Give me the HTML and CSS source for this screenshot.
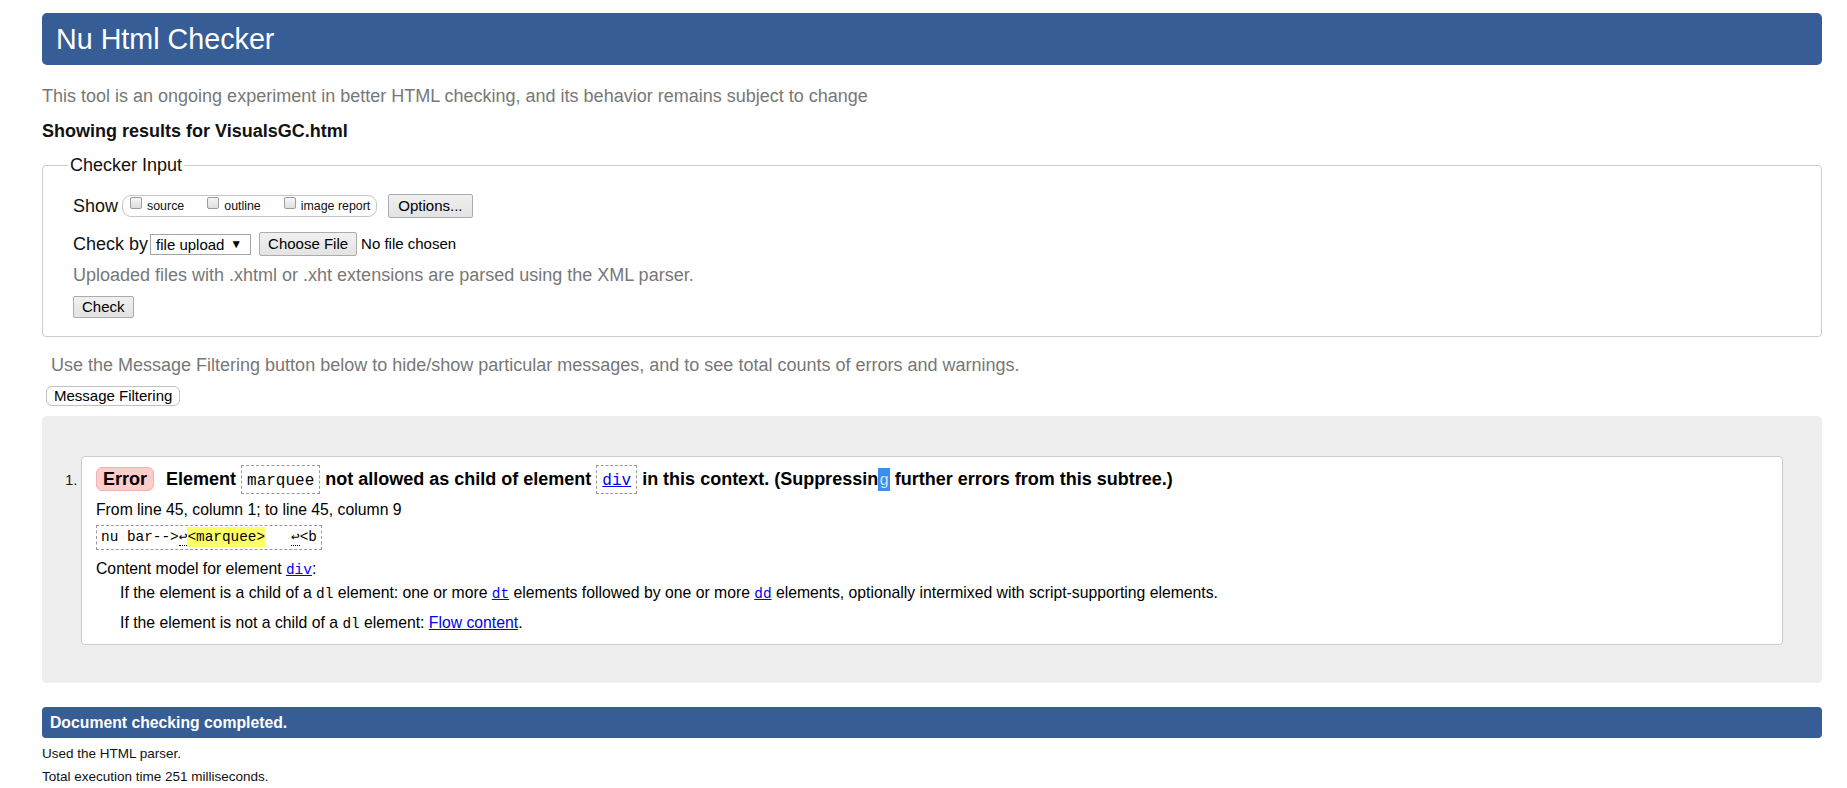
FILE: index.html
```html
<!DOCTYPE html>
<html lang="en">
<head>
<meta charset="utf-8">
<title>Nu Html Checker</title>
<link rel="stylesheet" href="styles.css">
</head>
<body>
<h1 class="title">Nu Html Checker</h1>
<p class="intro">This tool is an ongoing experiment in better HTML checking, and its behavior remains subject to change</p>
<p class="showing">Showing results for VisualsGC.html</p>
<form class="form">
  <fieldset class="checker">
    <legend class="legend">Checker Input</legend>
    <div class="row row-show">
      <span class="label">Show</span>
      <span class="pill">
        <label class="opt"><input type="checkbox" class="cb"><span>source</span></label>
        <label class="opt"><input type="checkbox" class="cb"><span>outline</span></label>
        <label class="opt"><input type="checkbox" class="cb"><span>image report</span></label>
      </span>
      <button type="button" class="btn btn-options">Options...</button>
    </div>
    <div class="row row-by">
      <span class="label">Check by</span>
      <span class="select"><span>file upload</span><span class="arrow">▼</span></span>
      <button type="button" class="btn btn-file">Choose File</button>
      <span class="nofile">No file chosen</span>
    </div>
    <p class="hint">Uploaded files with .xhtml or .xht extensions are parsed using the XML parser.</p>
    <button type="button" class="btn btn-check">Check</button>
  </fieldset>
</form>
<p class="filter-note">Use the Message Filtering button below to hide/show particular messages, and to see total counts of errors and warnings.</p>
<button type="button" class="btn-filter">Message Filtering</button>
<div class="results">
  <ol class="messages">
    <li class="msg">
      <span class="num">1.</span>
      <div class="card">
        <p class="msg-title"><strong class="badge">Error</strong> Element <code class="name">marquee</code> not allowed as child of element <code class="name"><a href="#">div</a></code> in this context. (Suppressin<span class="sel">g</span> further errors from this subtree.)</p>
        <p class="location">From line 45, column 1; to line 45, column 9</p>
        <p class="extract"><code class="extract-code">nu bar--&gt;<span class="lf">↩</span><b class="hl">&lt;marquee&gt;</b>   <span class="lf">↩</span>&lt;b</code></p>
        <p class="model">Content model for element <a class="mono" href="#">div</a>:</p>
        <dl class="model-list">
          <dd class="model-item">If the element is a child of a <code class="mono">dl</code> element: one or more <a class="mono" href="#">dt</a> elements followed by one or more <a class="mono" href="#">dd</a> elements, optionally intermixed with script-supporting elements.</dd>
          <dd class="model-item model-item-2">If the element is not a child of a <code class="mono">dl</code> element: <a href="#">Flow content</a>.</dd>
        </dl>
      </div>
    </li>
  </ol>
</div>
<p class="done">Document checking completed.</p>
<p class="stat">Used the HTML parser.</p>
<p class="stat stat-2">Total execution time 251 milliseconds.</p>
</body>
</html>
```

FILE: styles.css
```css
* {
  box-sizing: border-box;
}

html {
  background: #fff;
}

body {
  margin: 0 25px 0 42px;
  font-family: "Liberation Sans", Arial, sans-serif;
  font-size: 18px;
  line-height: 22px;
  color: #000;
}

a {
  color: #0000ee;
  text-decoration: underline;
}

.mono,
.name,
.sel,
.extract-code {
  font-family: "Liberation Mono", "DejaVu Sans Mono", monospace;
}

.title {
  margin: 13px 0 0;
  height: 52px;
  padding: 0 14px;
  line-height: 52px;
  font-size: 28.7px;
  font-weight: normal;
  color: #fff;
  background: #365d96;
  border-radius: 5px;
}

.intro {
  margin: 20px 0 0;
  color: #777;
}

.showing {
  margin: 13px 0 0;
  font-weight: bold;
  color: #111;
}

.form {
  margin: 0;
}

.checker {
  margin: 12px 0 0;
  padding: 0 30px 18px;
  border: 1px solid #ccc;
  border-radius: 4px;
  min-width: 0;
}

.legend {
  margin-left: -5px;
  padding: 0 2px;
  line-height: 22px;
  color: #111;
}

.row {
  display: flex;
  align-items: center;
  height: 24px;
}

.row-show {
  margin-top: 18px;
}

.row-by {
  margin-top: 14px;
}

.label {
  line-height: 22px;
  color: #111;
}

.pill {
  display: inline-flex;
  align-items: flex-start;
  height: 22px;
  margin-left: 4px;
  padding: 0 6px 0 7px;
  border: 1px solid #c6c6c6;
  border-radius: 9px;
}

.opt {
  display: flex;
  align-items: flex-start;
  margin-right: 23px;
  font-size: 12.4px;
  line-height: 20px;
  color: #111;
}

.opt:last-child {
  margin-right: 0;
}

.cb {
  appearance: none;
  -webkit-appearance: none;
  width: 12px;
  height: 12px;
  margin: 1px 5px 0 0;
  border: 1px solid #9c9c9c;
  border-radius: 2px;
  background: linear-gradient(#f6f6f6, #dedede);
}

.btn {
  height: 24px;
  padding: 0 9px;
  font-family: "Liberation Sans", Arial, sans-serif;
  font-size: 15px;
  line-height: 20px;
  color: #000;
  background: linear-gradient(#f0f0f0, #e3e3e3);
  border: 1px solid #acacac;
  border-radius: 2px;
}

.btn-options {
  margin-left: 11px;
}

.select {
  display: flex;
  align-items: center;
  width: 101px;
  height: 21px;
  margin-left: 2px;
  padding: 0 8px 0 5px;
  font-size: 15px;
  line-height: 19px;
  border: 1px solid #a6a6a6;
  background: #fff;
}

.arrow {
  margin-left: auto;
  font-size: 12px;
}

.btn-file {
  margin-left: 8px;
  padding: 0 8px;
}

.nofile {
  margin-left: 4px;
  font-size: 15px;
}

.hint {
  margin: 8px 0 0;
  color: #777;
}

.btn-check {
  display: block;
  height: 22px;
  margin-top: 10px;
  padding: 0 8px;
}

.filter-note {
  margin: 17px 0 0 9px;
  color: #777;
}

.btn-filter {
  display: block;
  height: 20px;
  margin: 10px 0 0 4px;
  padding: 0 7px;
  font-family: "Liberation Sans", Arial, sans-serif;
  font-size: 15px;
  line-height: 18px;
  color: #000;
  background: #fff;
  border: 1px solid #c2c2c2;
  border-radius: 6px;
}

.results {
  margin-top: 10px;
  padding: 40px 39px 38px 23px;
  background: #eee;
  border-radius: 5px;
}

.messages {
  margin: 0;
  padding: 0;
  list-style: none;
}

.msg {
  display: flex;
  align-items: baseline;
}

.num {
  width: 16px;
  flex: none;
  font-size: 15px;
  color: #222;
}

.card {
  flex: 1;
  min-width: 0;
  padding: 0 14px 12.3px;
  background: #fff;
  border: 1px solid #ccc;
  border-radius: 4px;
}

.msg-title {
  margin: 8px 0 0;
  font-weight: bold;
  line-height: 22px;
}

.badge {
  display: inline-block;
  margin-right: 7px;
  padding: 0 6px;
  line-height: 22px;
  background: #fcc;
  border: 1px solid #eeb3b3;
  border-radius: 6px;
}

.name {
  display: inline-block;
  padding: 6px 5px 2px;
  font-size: 16px;
  font-weight: normal;
  line-height: 19px;
  border: 1px dashed #999;
}

.sel {
  display: inline-block;
  padding: 5px 1px 1px;
  font-size: 16px;
  font-weight: normal;
  line-height: 17px;
  color: #cfe5ff;
  background: #3b8eea;
}

.location,
.model,
.model-item {
  font-size: 15.75px;
  line-height: 18px;
}

.location {
  margin: 7px 0 0;
}

.extract {
  display: flex;
  margin: 6px 0 0;
}

.extract-code {
  display: block;
  padding: 0 4px;
  font-size: 14.4px;
  line-height: 23px;
  white-space: pre;
  border: 1px dashed #999;
}

.lf {
  border-bottom: 1px dotted #000;
}

.hl {
  font-weight: normal;
  padding: 2px 0;
  background: #ff6;
}

.model {
  margin: 9.5px 0 0;
}

.mono {
  font-size: 14.4px;
  line-height: 1;
}

.model-list {
  margin: 6px 0 0;
}

.model-item {
  margin: 0 0 0 24px;
}

.model-item-2 {
  margin-top: 12px;
}

.done {
  margin: 24px 0 0;
  height: 31px;
  padding: 0 8px;
  font-size: 15.75px;
  font-weight: bold;
  line-height: 31px;
  color: #fff;
  background: #365d96;
  border-radius: 4px;
}

.stat {
  margin: 8px 0 0;
  font-size: 13.5px;
  line-height: 16px;
  color: #111;
}

.stat-2 {
  margin-top: 7px;
}
```
